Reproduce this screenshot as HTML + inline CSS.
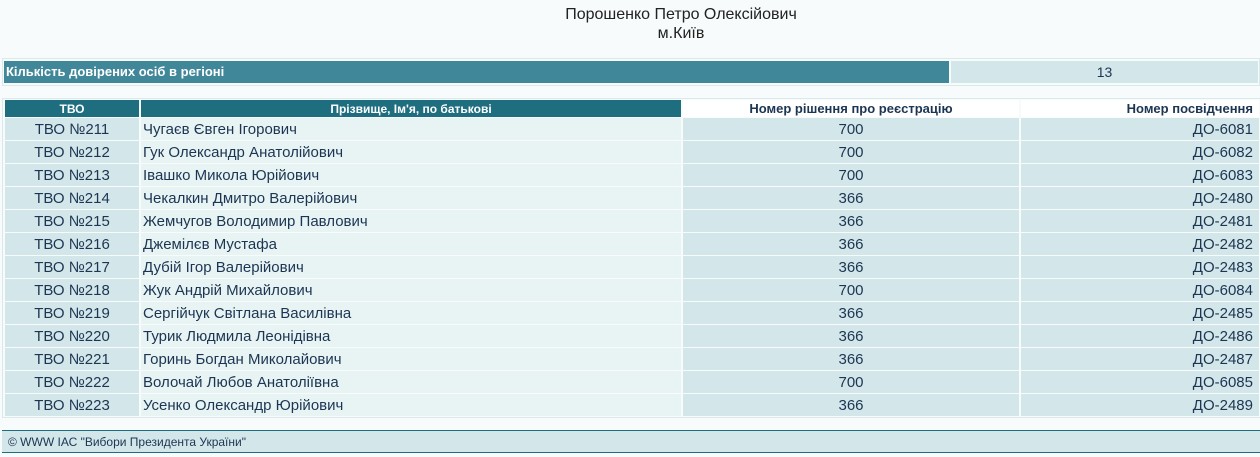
<!DOCTYPE html>
<html><head><meta charset="utf-8"><style>
body{margin:0;background:#f7fbfb;font-family:"Liberation Sans",Arial,sans-serif;width:1260px;height:457px;overflow:hidden;position:relative;color:#1c3552}
.t{position:absolute;left:0;width:1362px;text-align:center;font-size:16px;color:#222}
.bar{position:absolute;top:61px;left:4px;width:945px;height:22px;background:#41879a;color:#fff;font-weight:bold;font-size:13px;line-height:22px;padding-left:2px;box-sizing:border-box}
.cnt{position:absolute;top:61px;left:951px;width:307px;height:22px;background:#d3e7ea;text-align:center;font-size:14px;line-height:22px}
.frame{position:absolute;left:2px;top:58px;width:1258px;height:28px;border:1px solid #d8eaea;box-sizing:border-box}
table{position:absolute;left:2px;top:98px;border-collapse:separate;border-spacing:2px 1px;border:1px solid #d8eaea;width:1260px}
td,th{padding:0;height:22px;font-size:15px}
th{height:17px;font-size:13px;font-weight:bold}
th.a{background:#1f6e80;color:#fff;font-size:12px}
th.b{background:#fff;color:#1c3552}
td{background:#d3e7ea;text-align:center}
td.n{background:#e8f4f4;text-align:left;padding-left:2px}
td.r{text-align:right;padding-right:6px}
th.r{text-align:right;padding-right:6px}
.foot{position:absolute;left:2px;top:430px;width:1258px;height:23px;background:#d3e7ea;border-top:1px solid #1f6e80;border-bottom:1px solid #1f6e80;box-sizing:border-box;font-size:12px;line-height:22px;padding-left:6px;color:#1c3552}
</style></head><body>
<div class="t" style="top:6px">Порошенко Петро Олексійович</div>
<div class="t" style="top:25px">м.Київ</div>
<div class="frame"></div>
<div class="bar">Кількість довірених осіб в регіоні</div>
<div class="cnt">13</div>
<table>
<tr><th class="a" style="width:134px">ТВО</th><th class="a" style="width:540px">Прізвище, Ім'я, по батькові</th><th class="b" style="width:336px">Номер рішення про реєстрацію</th><th class="b r">Номер посвідчення</th></tr>
<tr><td>ТВО №211</td><td class="n">Чугаєв Євген Ігорович</td><td>700</td><td class="r">ДО-6081</td></tr>
<tr><td>ТВО №212</td><td class="n">Гук Олександр Анатолійович</td><td>700</td><td class="r">ДО-6082</td></tr>
<tr><td>ТВО №213</td><td class="n">Івашко Микола Юрійович</td><td>700</td><td class="r">ДО-6083</td></tr>
<tr><td>ТВО №214</td><td class="n">Чекалкин Дмитро Валерійович</td><td>366</td><td class="r">ДО-2480</td></tr>
<tr><td>ТВО №215</td><td class="n">Жемчугов Володимир Павлович</td><td>366</td><td class="r">ДО-2481</td></tr>
<tr><td>ТВО №216</td><td class="n">Джемілєв Мустафа</td><td>366</td><td class="r">ДО-2482</td></tr>
<tr><td>ТВО №217</td><td class="n">Дубій Ігор Валерійович</td><td>366</td><td class="r">ДО-2483</td></tr>
<tr><td>ТВО №218</td><td class="n">Жук Андрій Михайлович</td><td>700</td><td class="r">ДО-6084</td></tr>
<tr><td>ТВО №219</td><td class="n">Сергійчук Світлана Василівна</td><td>366</td><td class="r">ДО-2485</td></tr>
<tr><td>ТВО №220</td><td class="n">Турик Людмила Леонідівна</td><td>366</td><td class="r">ДО-2486</td></tr>
<tr><td>ТВО №221</td><td class="n">Горинь Богдан Миколайович</td><td>366</td><td class="r">ДО-2487</td></tr>
<tr><td>ТВО №222</td><td class="n">Волочай Любов Анатоліївна</td><td>700</td><td class="r">ДО-6085</td></tr>
<tr><td>ТВО №223</td><td class="n">Усенко Олександр Юрійович</td><td>366</td><td class="r">ДО-2489</td></tr>
</table>
<div class="foot">© WWW ІАС "Вибори Президента України"</div>
</body></html>
